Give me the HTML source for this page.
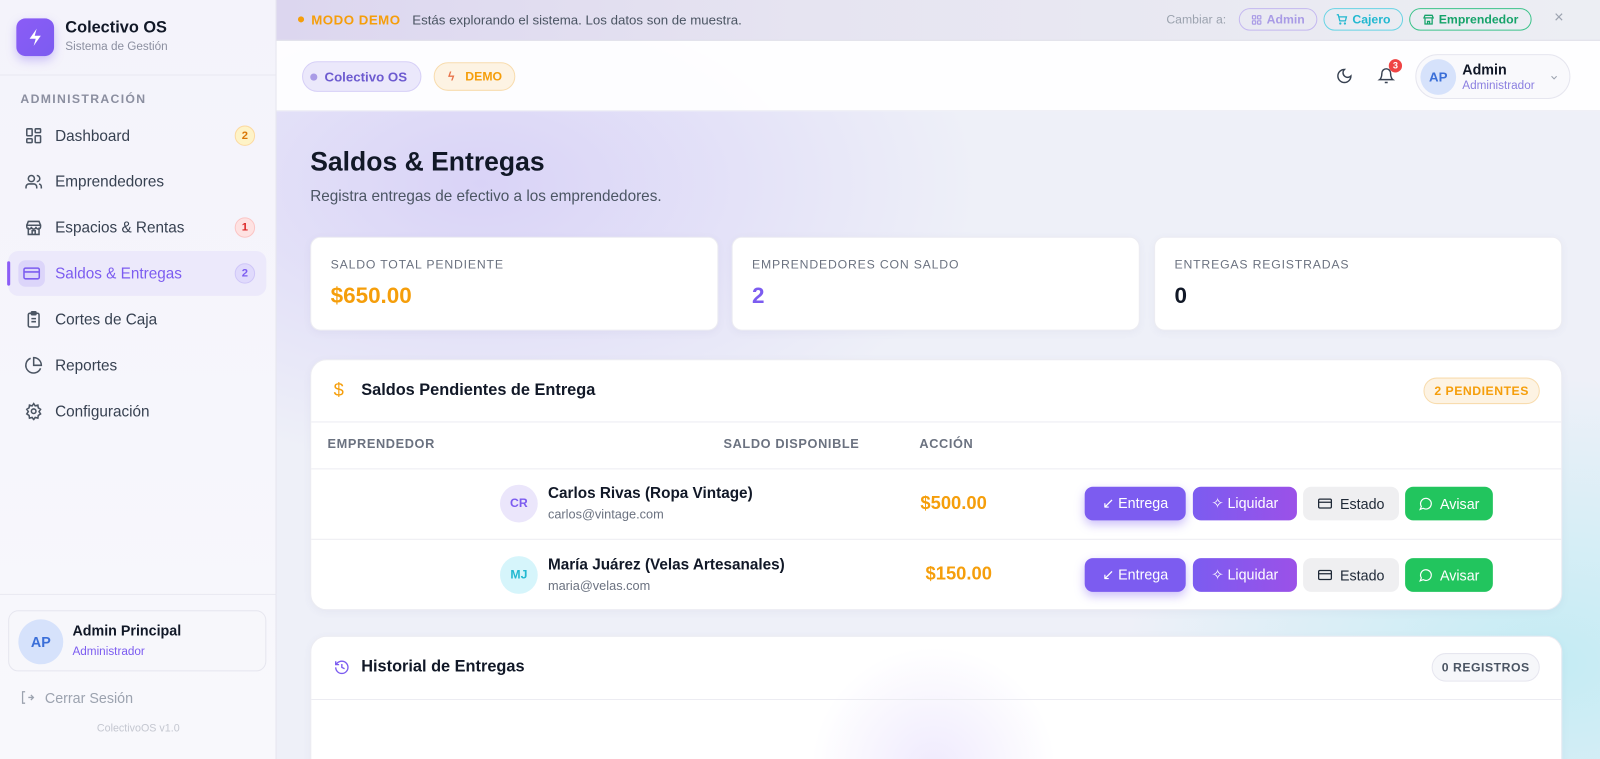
<!DOCTYPE html>
<html><head><meta charset="utf-8"><style>
*{box-sizing:border-box;margin:0;padding:0}
html,body{width:1600px;height:759px;overflow:hidden}
body{font-family:"Liberation Sans",sans-serif;background:#eef0f8;color:#111827;position:relative}
#clip{position:absolute;left:0;top:0;width:1600px;height:759px;overflow:hidden}
#w{position:absolute;left:0;top:0;width:1568px;height:744px;overflow:hidden;transform:scale(1.02041);transform-origin:0 0}
.side{position:absolute;left:0;top:0;width:271px;height:744px;background:linear-gradient(180deg,#f4f3fb,#f8f8fc);border-right:1px solid #e6e6ef}
.logo{position:absolute;left:16px;top:18px;width:37px;height:37px;border-radius:9px;background:linear-gradient(135deg,#8b5cf6,#7c5cf0);box-shadow:0 4px 10px rgba(124,92,240,.35)}
.nav{position:absolute;left:8px;width:253px;height:44px;display:flex;align-items:center;font-size:15px;color:#374151}
.nav svg{position:absolute;left:16px}
.nav span.t{position:absolute;left:46px}
.badge{position:absolute;right:11px;width:20px;height:20px;border-radius:50%;font-size:11px;font-weight:bold;display:flex;align-items:center;justify-content:center}
.main{position:absolute;left:271px;top:0;width:1297px;height:744px;overflow:hidden;background:radial-gradient(ellipse 700px 400px at 200px 180px,#d9d3f7,rgba(230,228,248,0) 70%),radial-gradient(ellipse 600px 400px at 1250px 650px,#c4ecf4,rgba(220,240,248,0) 70%),#eef0f8}
.banner{position:absolute;left:0;top:0;width:1297px;height:40px;background:linear-gradient(90deg,#dcd6ef,#e6e4f1 40%,#eceef3);border-bottom:1px solid #dcdce6;font-size:13px}
.hdr{position:absolute;left:0;top:40px;width:1297px;height:69px;background:rgba(255,255,255,.93);border-bottom:1px solid #ececf3}
.pill{position:absolute;border-radius:15px;font-size:12px;font-weight:bold;display:flex;align-items:center;justify-content:center;gap:4px;height:22px;top:8px}
.card{position:absolute;background:#fff;border-radius:10px;border:1px solid #ececf2;box-shadow:0 2px 8px rgba(100,100,150,.06)}
.lab{position:absolute;left:19px;top:19px;font-size:12px;letter-spacing:.8px;color:#6b7280}
.val{position:absolute;left:19px;top:44px;font-size:22px;font-weight:bold}
.btn{position:absolute;height:33px;border-radius:8px;font-size:14px;display:flex;align-items:center;justify-content:center;gap:7px}
.bE{background:#7c5cf0;color:#fff;box-shadow:0 4px 10px rgba(124,92,240,.4);width:99px}
.bL{background:linear-gradient(90deg,#7c5cf0,#9b51e8);color:#fff;width:102px}
.bS{background:#efeff1;color:#1f2937;width:94px}
.bA{background:#22c55e;color:#fff;width:86px}
</style></head><body><div id="clip"><div id="w">
<div class="side">
 <div class="logo"><svg width="37" height="37" viewBox="0 0 37 37"><path d="M20 10l-7 10h6l-2 7 7-10h-6z" fill="#fff"/></svg></div>
 <div style="position:absolute;left:64px;top:19px;font-size:16px;font-weight:bold">Colectivo OS</div>
 <div style="position:absolute;left:64px;top:40px;font-size:11.5px;color:#8b8fa0">Sistema de Gestión</div>
 <div style="position:absolute;left:0;top:73px;width:271px;border-top:1px solid #e8e8f0"></div>
 <div style="position:absolute;left:20px;top:90px;font-size:12px;letter-spacing:1.3px;color:#8b8fa0;font-weight:bold">ADMINISTRACIÓN</div>
 <div class="nav" style="top:111px"><svg width="18" height="18" viewBox="0 0 24 24" fill="none" stroke="#4b5563" stroke-width="2"><rect x="3" y="3" width="7" height="9" rx="1"/><rect x="14" y="3" width="7" height="5" rx="1"/><rect x="14" y="12" width="7" height="9" rx="1"/><rect x="3" y="16" width="7" height="5" rx="1"/></svg><span class="t">Dashboard</span><span class="badge" style="background:#fef3c7;color:#d97706;border:1px solid #fcd9a0">2</span></div>
 <div class="nav" style="top:156px"><svg width="18" height="18" viewBox="0 0 24 24" fill="none" stroke="#4b5563" stroke-width="2"><circle cx="9" cy="8" r="4"/><path d="M2 21v-2a4 4 0 014-4h6a4 4 0 014 4v2M16 4a4 4 0 010 8M22 21v-2a4 4 0 00-3-4"/></svg><span class="t">Emprendedores</span></div>
 <div class="nav" style="top:201px"><svg width="18" height="18" viewBox="0 0 24 24" fill="none" stroke="#4b5563" stroke-width="2"><path d="M3 9l2-5h14l2 5M3 9h18v2a3 3 0 01-6 0 3 3 0 01-6 0 3 3 0 01-6 0zM5 12v9h14v-9M10 21v-5h4v5"/></svg><span class="t">Espacios &amp; Rentas</span><span class="badge" style="background:#fee2e2;color:#dc2626;border:1px solid #fbc5c5">1</span></div>
 <div class="nav" style="top:246px;background:#ece9fb;border-radius:10px;color:#7c5cf0;font-weight:bold"><div style="position:absolute;left:-1px;top:10px;width:3px;height:24px;background:#8b5cf6;border-radius:2px"></div><div style="position:absolute;left:10px;top:9px;width:26px;height:26px;background:#dcd5fa;border-radius:7px"></div><svg width="18" height="18" viewBox="0 0 24 24" fill="none" stroke="#7c5cf0" stroke-width="2" style="left:14px"><rect x="2" y="5" width="20" height="14" rx="2"/><path d="M2 10h20"/></svg><span class="t" style="font-weight:normal">Saldos &amp; Entregas</span><span class="badge" style="background:#e0dafc;color:#7c5cf0;border:1px solid #cfc6f8">2</span></div>
 <div class="nav" style="top:291px"><svg width="18" height="18" viewBox="0 0 24 24" fill="none" stroke="#4b5563" stroke-width="2"><rect x="5" y="4" width="14" height="18" rx="2"/><rect x="9" y="2" width="6" height="4" rx="1"/><path d="M9 11h6M9 15h6"/></svg><span class="t">Cortes de Caja</span></div>
 <div class="nav" style="top:336px"><svg width="18" height="18" viewBox="0 0 24 24" fill="none" stroke="#4b5563" stroke-width="2"><path d="M21 15.9A10 10 0 118 2.8"/><path d="M22 12A10 10 0 0012 2v10z"/></svg><span class="t">Reportes</span></div>
 <div class="nav" style="top:381px"><svg width="18" height="18" viewBox="0 0 24 24" fill="none" stroke="#4b5563" stroke-width="2"><circle cx="12" cy="12" r="3"/><path d="M12 2l2 3 3.5-1 .5 3.5 3 2-2 3 2 3-3 2-.5 3.5-3.5-1-2 3-2-3-3.5 1-.5-3.5-3-2 2-3-2-3 3-2 .5-3.5 3.5 1z"/></svg><span class="t">Configuración</span></div>
 <div style="position:absolute;left:0;top:582px;width:271px;border-top:1px solid #e8e8f0"></div>
 <div style="position:absolute;left:8px;top:598px;width:253px;height:60px;border:1px solid #e6e6ef;border-radius:10px;background:#f7f7fb">
  <div style="position:absolute;left:9px;top:8px;width:44px;height:44px;border-radius:50%;background:#d6e2fb;color:#3b6fd8;font-weight:bold;font-size:14px;display:flex;align-items:center;justify-content:center">AP</div>
  <div style="position:absolute;left:62px;top:11px;font-size:14px;font-weight:bold">Admin Principal</div>
  <div style="position:absolute;left:62px;top:34px;font-size:11.5px;color:#7c5cf0">Administrador</div>
 </div>
 <svg style="position:absolute;left:19px;top:676px" width="15" height="15" viewBox="0 0 24 24" fill="none" stroke="#9ca3af" stroke-width="2"><path d="M9 3H5v18h4M14 12h8M18 8l4 4-4 4"/></svg>
 <div style="position:absolute;left:44px;top:676px;font-size:14px;color:#9ca3af">Cerrar Sesión</div>
 <div style="position:absolute;left:0;width:271px;text-align:center;top:708px;font-size:10.5px;color:#c4c7d0">ColectivoOS v1.0</div>
</div>
<div class="main">
 <div class="banner">
  <div style="position:absolute;left:21px;top:16px;width:6px;height:6px;border-radius:50%;background:#f59e0b"></div>
  <div style="position:absolute;left:34px;top:12px;color:#f59e0b;font-weight:bold;letter-spacing:.5px">MODO DEMO</div>
  <div style="position:absolute;left:133px;top:12px;color:#4b5563">Estás explorando el sistema. Los datos son de muestra.</div>
  <div style="position:absolute;left:872px;top:12px;color:#9ca3af;font-size:12px">Cambiar a:</div>
  <div class="pill" style="left:943px;border:1px solid #c4b8f0;color:#a99be6;width:77px"><svg width="11" height="11" viewBox="0 0 24 24" fill="none" stroke="#a99be6" stroke-width="2.5"><rect x="3" y="3" width="7" height="7" rx="1"/><rect x="14" y="3" width="7" height="7" rx="1"/><rect x="3" y="14" width="7" height="7" rx="1"/><rect x="14" y="14" width="7" height="7" rx="1"/></svg>Admin</div>
  <div class="pill" style="left:1026px;border:1px solid #67d4e4;color:#22b8d0;width:78px"><svg width="12" height="12" viewBox="0 0 24 24" fill="none" stroke="#22b8d0" stroke-width="2.5"><path d="M2 3h3l3 12h11l2-8H6"/><circle cx="9" cy="20" r="1"/><circle cx="18" cy="20" r="1"/></svg>Cajero</div>
  <div class="pill" style="left:1110px;border:1px solid #3cc38a;color:#16a36a;width:120px"><svg width="12" height="12" viewBox="0 0 24 24" fill="none" stroke="#16a36a" stroke-width="2.5"><path d="M3 9l2-5h14l2 5H3zM5 9v12h14V9M10 21v-5h4v5"/></svg>Emprendedor</div>
  <div style="position:absolute;left:1252px;top:9px;color:#9ca3af;font-size:16px">×</div>
 </div>
 <div class="hdr">
  <div style="position:absolute;left:25px;top:20px;width:117px;height:30px;border-radius:15px;background:#ebe8fb;border:1px solid #d6cff7;font-size:13px;font-weight:bold;color:#6d5bd0;display:flex;align-items:center;padding-left:21px">Colectivo OS<div style="position:absolute;left:7px;top:11px;width:7px;height:7px;border-radius:50%;background:#a99be6"></div></div>
  <div style="position:absolute;left:154px;top:21px;width:80px;height:28px;border-radius:14px;background:#fdf3e3;border:1px solid #f8dcae;font-size:12px;font-weight:bold;color:#f59e0b;display:flex;align-items:center;padding-left:30px"><span style="position:absolute;left:13px;color:#e8734a">ϟ</span>DEMO</div>
  <svg style="position:absolute;left:1038px;top:26px" width="17" height="17" viewBox="0 0 24 24" fill="none" stroke="#374151" stroke-width="2"><path d="M12 3a6 6 0 009 9 9 9 0 11-9-9z"/></svg>
  <svg style="position:absolute;left:1079px;top:26px" width="17" height="17" viewBox="0 0 24 24" fill="none" stroke="#374151" stroke-width="2"><path d="M6 8a6 6 0 0112 0c0 7 3 9 3 9H3s3-2 3-9M10 21h4"/></svg>
  <div style="position:absolute;left:1090px;top:18px;width:13px;height:13px;border-radius:50%;background:#ef4444;color:#fff;font-size:9px;font-weight:bold;text-align:center;line-height:13px">3</div>
  <div style="position:absolute;left:1116px;top:13px;width:152px;height:44px;border-radius:22px;border:1px solid #e6e6ef;background:#f9f9fc">
   <div style="position:absolute;left:4px;top:4px;width:35px;height:35px;border-radius:50%;background:#d6e2fb;color:#3b6fd8;font-weight:bold;font-size:13px;display:flex;align-items:center;justify-content:center">AP</div>
   <div style="position:absolute;left:45px;top:6px;font-size:14px;font-weight:bold">Admin</div>
   <div style="position:absolute;left:45px;top:24px;font-size:11.5px;color:#8b7fe0">Administrador</div>
   <svg style="position:absolute;left:130px;top:17px" width="10" height="10" viewBox="0 0 24 24" fill="none" stroke="#9ca3af" stroke-width="2.5"><path d="M6 9l6 6 6-6"/></svg>
  </div>
 </div>
 <div style="position:absolute;left:33px;top:143px;font-size:26px;font-weight:bold;color:#111827">Saldos &amp; Entregas</div>
 <div style="position:absolute;left:33px;top:184px;font-size:15px;color:#4b5563">Registra entregas de efectivo a los emprendedores.</div>
 <div class="card" style="left:33px;top:232px;width:400px;height:92px"><div class="lab">SALDO TOTAL PENDIENTE</div><div class="val" style="color:#f59e0b">$650.00</div></div>
 <div class="card" style="left:446px;top:232px;width:400px;height:92px"><div class="lab">EMPRENDEDORES CON SALDO</div><div class="val" style="color:#7c5cf0">2</div></div>
 <div class="card" style="left:860px;top:232px;width:400px;height:92px"><div class="lab">ENTREGAS REGISTRADAS</div><div class="val">0</div></div>
 <div class="card" style="left:33px;top:352px;width:1227px;height:246px;border-radius:16px">
  <div style="position:absolute;left:22px;top:19px;color:#f59e0b;font-size:18px">$</div>
  <div style="position:absolute;left:49px;top:21px;font-size:16px;font-weight:bold;color:#111827">Saldos Pendientes de Entrega</div>
  <div style="position:absolute;left:1090px;top:17px;width:114px;height:26px;border-radius:13px;background:#fdf3e3;border:1px solid #f8dcae;color:#f59e0b;font-size:12px;font-weight:bold;letter-spacing:.5px;text-align:center;line-height:24px">2 PENDIENTES</div>
  <div style="position:absolute;left:0;top:60px;width:100%;border-top:1px solid #ececf2"></div>
  <div style="position:absolute;left:16px;top:75px;font-size:12.5px;color:#6b7280;letter-spacing:.6px;font-weight:bold">EMPRENDEDOR</div>
  <div style="position:absolute;left:404px;top:75px;font-size:12.5px;color:#6b7280;letter-spacing:.6px;font-weight:bold">SALDO DISPONIBLE</div>
  <div style="position:absolute;left:596px;top:75px;font-size:12.5px;color:#6b7280;letter-spacing:.6px;font-weight:bold">ACCIÓN</div>
  <div style="position:absolute;left:0;top:106px;width:100%;border-top:1px solid #ececf2"></div>
  <div style="position:absolute;left:0;top:175px;width:100%;border-top:1px solid #ececf2"></div>
  <div style="position:absolute;left:185px;top:122px;width:37px;height:37px;border-radius:50%;background:#ebe6fb;color:#7c5cf0;font-size:12px;font-weight:bold;text-align:center;line-height:37px">CR</div>
  <div style="position:absolute;left:232px;top:122px;font-size:15px;font-weight:bold;color:#111827">Carlos Rivas (Ropa Vintage)</div>
  <div style="position:absolute;left:232px;top:144px;font-size:12.5px;color:#6b7280">carlos@vintage.com</div>
  <div style="position:absolute;left:597px;top:130px;font-size:18px;font-weight:bold;color:#f59e0b">$500.00</div>
  <div style="position:absolute;left:185px;top:192px;width:37px;height:37px;border-radius:50%;background:#d6f5fb;color:#22b8d0;font-size:12px;font-weight:bold;text-align:center;line-height:37px">MJ</div>
  <div style="position:absolute;left:232px;top:192px;font-size:15px;font-weight:bold;color:#111827">María Juárez (Velas Artesanales)</div>
  <div style="position:absolute;left:232px;top:214px;font-size:12.5px;color:#6b7280">maria@velas.com</div>
  <div style="position:absolute;left:602px;top:199px;font-size:18px;font-weight:bold;color:#f59e0b">$150.00</div>
  <div class="btn bE" style="left:758px;top:124px">↙ Entrega</div>
  <div class="btn bL" style="left:864px;top:124px">✧ Liquidar</div>
  <div class="btn bS" style="left:972px;top:124px"><svg width="15" height="15" viewBox="0 0 24 24" fill="none" stroke="#1f2937" stroke-width="2"><rect x="2" y="5" width="20" height="14" rx="2"/><path d="M2 10h20"/></svg>Estado</div>
  <div class="btn bA" style="left:1072px;top:124px"><svg width="14" height="14" viewBox="0 0 24 24" fill="none" stroke="#fff" stroke-width="2"><path d="M3 21l2-5a9 9 0 113 3z"/></svg>Avisar</div>
  <div class="btn bE" style="left:758px;top:194px">↙ Entrega</div>
  <div class="btn bL" style="left:864px;top:194px">✧ Liquidar</div>
  <div class="btn bS" style="left:972px;top:194px"><svg width="15" height="15" viewBox="0 0 24 24" fill="none" stroke="#1f2937" stroke-width="2"><rect x="2" y="5" width="20" height="14" rx="2"/><path d="M2 10h20"/></svg>Estado</div>
  <div class="btn bA" style="left:1072px;top:194px"><svg width="14" height="14" viewBox="0 0 24 24" fill="none" stroke="#fff" stroke-width="2"><path d="M3 21l2-5a9 9 0 113 3z"/></svg>Avisar</div>
 </div>
 <div class="card" style="left:33px;top:623px;width:1227px;height:140px;border-radius:16px;background:radial-gradient(circle 120px at 610px 130px,#efeafd,#fff)">
  <svg style="position:absolute;left:22px;top:22px" width="16" height="16" viewBox="0 0 24 24" fill="none" stroke="#7c5cf0" stroke-width="2"><path d="M3 12a9 9 0 109-9 9.7 9.7 0 00-7 3L3 8M3 3v5h5M12 7v5l4 2"/></svg>
  <div style="position:absolute;left:49px;top:21px;font-size:16px;font-weight:bold;color:#111827">Historial de Entregas</div>
  <div style="position:absolute;left:1098px;top:16px;width:106px;height:28px;border-radius:14px;background:#f6f7fa;border:1px solid #e6e6ef;color:#4b5563;font-size:12px;font-weight:bold;letter-spacing:.5px;text-align:center;line-height:26px">0 REGISTROS</div>
  <div style="position:absolute;left:0;top:61px;width:100%;border-top:1px solid #ececf2"></div>
 </div>
</div>
</div></div></body></html>
